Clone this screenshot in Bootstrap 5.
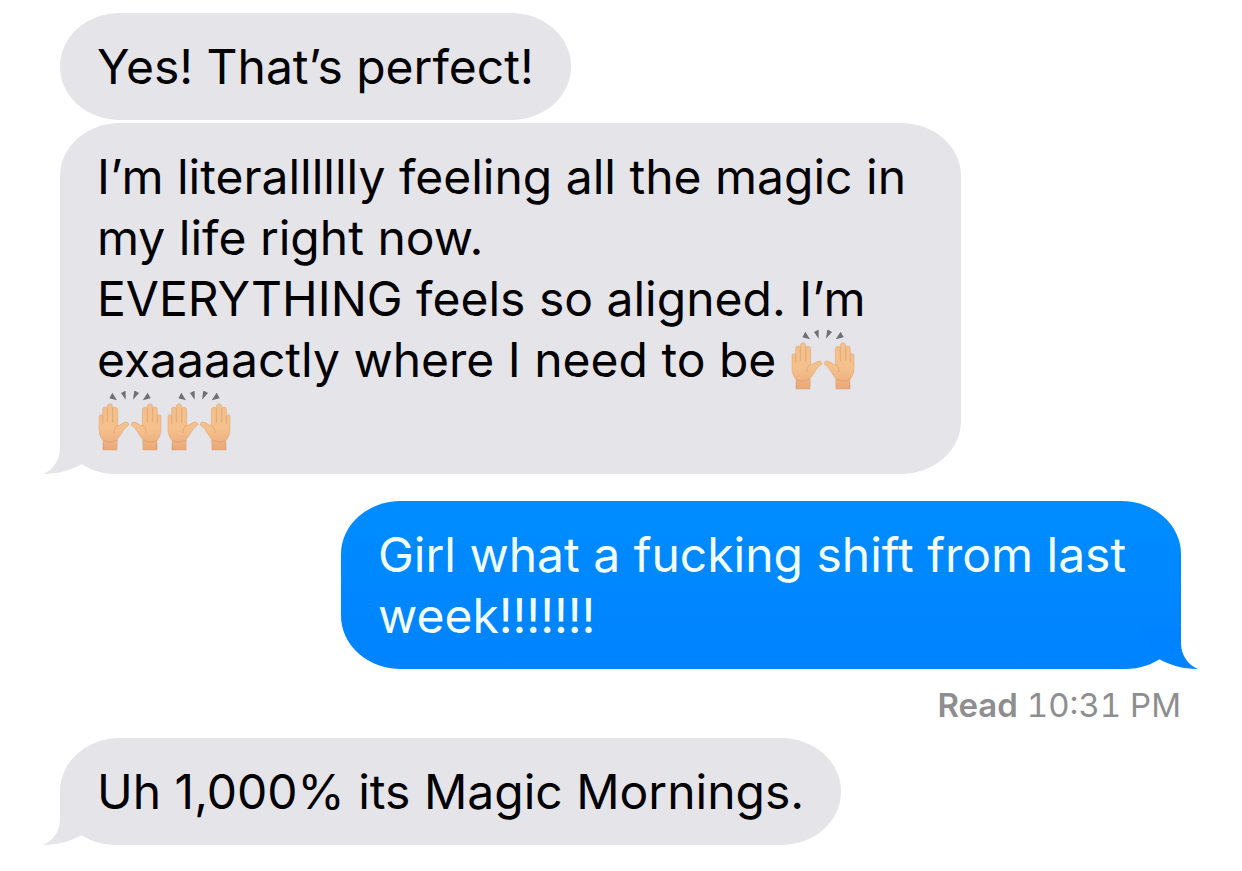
<!DOCTYPE html>
<html lang="en">
<head>
<meta charset="utf-8">
<meta name="viewport" content="width=device-width, initial-scale=1">
<title>Messages</title>
<link href="https://cdn.jsdelivr.net/npm/bootstrap@5.3.0/dist/css/bootstrap.min.css" rel="stylesheet">
<style>
  body { font-family: Inter, "Liberation Sans", sans-serif; background: #fff; }
  .thread { padding: 13px 61px 24px 60px; }
  .bubble { padding: 23px 37px; font-size: 48px; line-height: 61px; border-radius: 60px / 53px; }
  .incoming { max-width: 901px; color: #000; background: #e5e4e9; }
  .outgoing { max-width: 840px; margin-top: 27px; color: #f2ffff; background: linear-gradient(#008cff, #0083ff); }
  .incoming.tailed { border-bottom-left-radius: 56px 46px; }
  .outgoing.tailed { border-bottom-right-radius: 56px 46px; }
  .tail { position: absolute; bottom: 0; width: 56px; height: 44px; }
  .incoming .tail { left: -17px; fill: #e5e4e9; }
  .outgoing .tail { right: -17px; fill: #0083ff; transform: scaleX(-1); }
  .stacked { margin-bottom: 3px; }
  .hands { width: 69px; height: 60px; vertical-align: -13px; }
  .receipt { font-size: 33px; line-height: 40px; color: #8e8e90; margin: 16px 0 13px; font-variant-numeric: tabular-nums; }
</style>
</head>
<body>
<svg class="position-absolute" width="0" height="0" aria-hidden="true">
  <defs>
    <linearGradient id="skin" x1="0" y1="0" x2="0" y2="1">
      <stop offset="0" stop-color="#f2c08c"/><stop offset=".55" stop-color="#f5c08c"/><stop offset="1" stop-color="#e9a878"/>
    </linearGradient>
    <symbol id="tail-shape" viewBox="0 0 56 44">
      <path d="M17 0V18C17 30 10 40 0 44C16 44 28 40 39 34L56 10V0Z"/>
    </symbol>
    <g id="hand">
      <path fill="url(#skin)" stroke="#dda06d" stroke-width="1.5" d="M42 207L43 180C34 169 30 158 30 146V107Q30 101 36 101Q41 101 41 107V84Q42 78 48 78Q54 78 55 83V75Q57 68 63 68Q70 68 71 76V83Q73 78 79 79Q86 80 86 87V134C94 133 99 126 108 124Q117 121 119 128Q121 133 115 136C105 141 98 160 85 175L84 207Z"/>
      <path fill="none" stroke="#d99a68" stroke-width="2" d="M41 106V128M55 82V123M71 82V125M86 132C79 137 74 145 75 156"/>
      <path fill="none" stroke="#da9367" stroke-width="3" opacity=".6" d="M44 179Q62 188 83 177M43 184V205"/>
    </g>
    <symbol id="raised-hands" viewBox="24 30 207 180">
      <use href="#hand"/>
      <use href="#hand" transform="translate(246 0) scale(-1 1)"/>
      <path fill="#707074" d="M70 35L84 58L61 52ZM96 36L110 29V56ZM136 28L150 36L132 56ZM176 35L185 52L161 58Z"/>
    </symbol>
  </defs>
</svg>

<main class="thread container-fluid d-flex flex-column align-items-start">
  <div class="bubble incoming stacked">Yes! That’s perfect!</div>

  <div class="bubble incoming tailed position-relative">
    I’m literalllllly feeling all the magic in my life right now.<br>EVERYTHING feels so aligned. I’m exaaaactly where I need to be <svg class="hands" role="img" aria-label="Raised hands"><use href="#raised-hands"/></svg><wbr><svg class="hands" role="img" aria-label="Raised hands"><use href="#raised-hands"/></svg><svg class="hands" role="img" aria-label="Raised hands"><use href="#raised-hands"/></svg>
    <svg class="tail" aria-hidden="true"><use href="#tail-shape"/></svg>
  </div>

  <div class="bubble outgoing tailed position-relative align-self-end">
    Girl what a fucking shift from last week!!!!!!!
    <svg class="tail" aria-hidden="true"><use href="#tail-shape"/></svg>
  </div>
  <div class="receipt align-self-end"><span class="fw-semibold">Read</span> 10:31 PM</div>

  <div class="bubble incoming tailed position-relative">
    Uh 1,000% its Magic Mornings.
    <svg class="tail" aria-hidden="true"><use href="#tail-shape"/></svg>
  </div>
</main>
<script src="https://cdn.jsdelivr.net/npm/bootstrap@5.3.0/dist/js/bootstrap.bundle.min.js"></script>
</body>
</html>
